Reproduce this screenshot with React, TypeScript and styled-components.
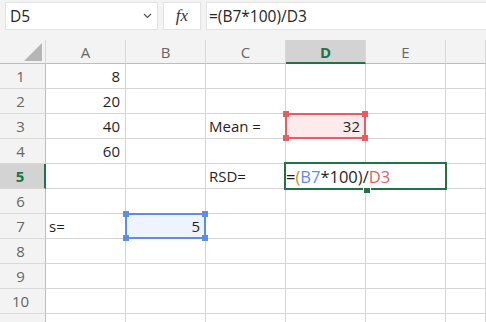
import React from "react";
import styled, { createGlobalStyle } from "styled-components";

const Global = createGlobalStyle`
  html, body { margin: 0; padding: 0; background: #ffffff; }
  body { font-family: "Open Sans", "Noto Sans", sans-serif; overflow: hidden; }
`;

const Page = styled.div`
  width: 486px;
  height: 322px;
  overflow: hidden;
  background: #ffffff;
`;

const FormulaBar = styled.div`
  display: flex;
  align-items: flex-start;
  height: 40px;
  padding: 2px 0 0 5px;
  box-sizing: border-box;
  background: #f3f3f3;
  gap: 5px;
`;

const Box = styled.div<{ $w?: number; $grow?: boolean }>`
  height: 28px;
  box-sizing: border-box;
  background: #ffffff;
  border: 1px solid #e3e3e3;
  display: flex;
  align-items: center;
  ${(p) => (p.$w ? `width: ${p.$w}px;` : "")}
  ${(p) => (p.$grow ? "flex: 1; border-right: none;" : "")}
  font-size: 15.5px;
  color: #262626;
`;

const NameText = styled.span`
  flex: 1;
  padding-left: 4px;
`;

const Chevron = styled.span`
  width: 20px;
  display: flex;
  justify-content: center;
  color: #555;
`;

const Fx = styled.span`
  flex: 1;
  text-align: center;
  font-family: "Liberation Serif", "DejaVu Serif", serif;
  font-style: italic;
  font-size: 17px;
  color: #333;
`;

const FormulaText = styled.span`
  padding-left: 2px;
`;

const Grid = styled.div`
  display: grid;
  grid-template-columns: 46px 80px 80px 80px 80px 80px 40px;
  grid-template-rows: 24px repeat(10, 25px) 25px;
`;

const Corner = styled.div`
  background: #f3f3f3;
  border-right: 1px solid #d8d8d8;
  border-bottom: 1px solid #bdbdbd;
  position: relative;
`;

const Triangle = styled.div`
  position: absolute;
  left: 24px;
  top: 3px;
  width: 0;
  height: 0;
  border-left: 18px solid transparent;
  border-bottom: 18px solid #b5b5b5;
`;

const ColHead = styled.div<{ $sel?: boolean }>`
  background: ${(p) => (p.$sel ? "#d3d3d3" : "#f3f3f3")};
  border-right: 1px solid #d8d8d8;
  border-bottom: ${(p) => (p.$sel ? "2px solid #217346" : "1px solid #bdbdbd")};
  display: flex;
  align-items: center;
  justify-content: center;
  font-size: 15px;
  color: ${(p) => (p.$sel ? "#217346" : "#666666")};
  font-weight: ${(p) => (p.$sel ? 700 : 400)};
  padding-top: ${(p) => (p.$sel ? "1px" : "0")};
`;

const RowHead = styled.div<{ $sel?: boolean }>`
  background: ${(p) => (p.$sel ? "#d3d3d3" : "#f3f3f3")};
  border-right: ${(p) => (p.$sel ? "2px solid #217346" : "1px solid #bdbdbd")};
  border-bottom: 1px solid #d8d8d8;
  display: flex;
  align-items: center;
  justify-content: center;
  padding-right: 4px;
  font-size: 15px;
  color: ${(p) => (p.$sel ? "#217346" : "#666666")};
  font-weight: ${(p) => (p.$sel ? 700 : 400)};
`;

const Cell = styled.div<{ $align?: "left" | "right" }>`
  position: relative;
  border-right: 1px solid #d4d4d4;
  border-bottom: 1px solid #d4d4d4;
  display: flex;
  align-items: center;
  justify-content: ${(p) => (p.$align === "right" ? "flex-end" : "flex-start")};
  padding: 0 5px 0 3px;
  font-size: 15px;
  color: #1f1f1f;
  white-space: nowrap;
  overflow: visible;
`;

const RefBox = styled.div<{ $c: string; $bg: string }>`
  position: absolute;
  left: -1px;
  top: -1px;
  right: -1px;
  bottom: -1px;
  border: 2px solid ${(p) => p.$c};
  background: ${(p) => p.$bg};
  display: flex;
  align-items: center;
  justify-content: flex-end;
  padding-right: 4px;
  z-index: 2;
`;

const Handle = styled.span<{ $c: string; $x: "l" | "r"; $y: "t" | "b" }>`
  position: absolute;
  width: 6px;
  height: 6px;
  background: ${(p) => p.$c};
  ${(p) => (p.$x === "l" ? "left: -4px;" : "right: -4px;")}
  ${(p) => (p.$y === "t" ? "top: -4px;" : "bottom: -4px;")}
`;

const Editor = styled.div`
  position: absolute;
  left: -2px;
  top: -2px;
  width: 163px;
  height: 28px;
  box-sizing: border-box;
  border: 2px solid #217346;
  background: #ffffff;
  display: flex;
  align-items: center;
  padding-left: 0;
  font-size: 16.5px;
  z-index: 3;
`;

const FillHandle = styled.span`
  position: absolute;
  left: 77px;
  bottom: -5px;
  width: 6px;
  height: 5px;
  background: #217346;
  border-left: 1px solid #fff;
  border-right: 1px solid #fff;
`;

const Tok = styled.span<{ $c: string }>`
  color: ${(p) => p.$c};
`;

const refCell = (c: string, bg: string, value: string) => (
  <RefBox $c={c} $bg={bg}>
    {value}
    <Handle $c={c} $x="l" $y="t" />
    <Handle $c={c} $x="r" $y="t" />
    <Handle $c={c} $x="l" $y="b" />
    <Handle $c={c} $x="r" $y="b" />
  </RefBox>
);

const RED = "#e85e5e";
const BLUE = "#5b8ee8";

const cols = ["A", "B", "C", "D", "E", ""];

type CellData = { text?: React.ReactNode; align?: "left" | "right" };

const data: Record<string, CellData> = {
  A1: { text: "8", align: "right" },
  A2: { text: "20", align: "right" },
  A3: { text: "40", align: "right" },
  A4: { text: "60", align: "right" },
  C3: { text: "Mean =" },
  C5: { text: "RSD=" },
  A7: { text: "s=" },
};

export default function App() {
  const rows = Array.from({ length: 11 }, (_, i) => i + 1);
  return (
    <Page>
      <Global />
      <FormulaBar>
        <Box $w={153}>
          <NameText>D5</NameText>
          <Chevron>
            <svg width="9" height="6" viewBox="0 0 9 6">
              <path d="M1 1 L4.5 4.5 L8 1" fill="none" stroke="#555" strokeWidth="1.2" />
            </svg>
          </Chevron>
        </Box>
        <Box $w={38}>
          <Fx>fx</Fx>
        </Box>
        <Box $grow>
          <FormulaText>=(B7*100)/D3</FormulaText>
        </Box>
      </FormulaBar>
      <Grid>
        <Corner>
          <Triangle />
        </Corner>
        {cols.map((c, i) => (
          <ColHead key={i} $sel={c === "D"}>
            {c}
          </ColHead>
        ))}
        {rows.map((r) => (
          <React.Fragment key={r}>
            <RowHead $sel={r === 5}>{r <= 10 ? r : ""}</RowHead>
            {cols.map((c, ci) => {
              const key = `${c}${r}`;
              const d = data[key];
              let content: React.ReactNode = d?.text;
              if (key === "D3") content = refCell(RED, "#fdeaea", "32");
              if (key === "B7") content = refCell(BLUE, "#eef3fd", "5");
              if (key === "D5")
                content = (
                  <Editor>
                    <Tok $c="#1f1f1f">=</Tok>
                    <Tok $c="#d08a14">(</Tok>
                    <Tok $c={BLUE}>B7</Tok>
                    <Tok $c="#1f1f1f">*100</Tok>
                    <Tok $c="#3a2a10">)</Tok>
                    <Tok $c="#1f1f1f">/</Tok>
                    <Tok $c={RED}>D3</Tok>
                    <FillHandle />
                  </Editor>
                );
              return (
                <Cell key={ci} $align={d?.align}>
                  {content}
                </Cell>
              );
            })}
          </React.Fragment>
        ))}
      </Grid>
    </Page>
  );
}
